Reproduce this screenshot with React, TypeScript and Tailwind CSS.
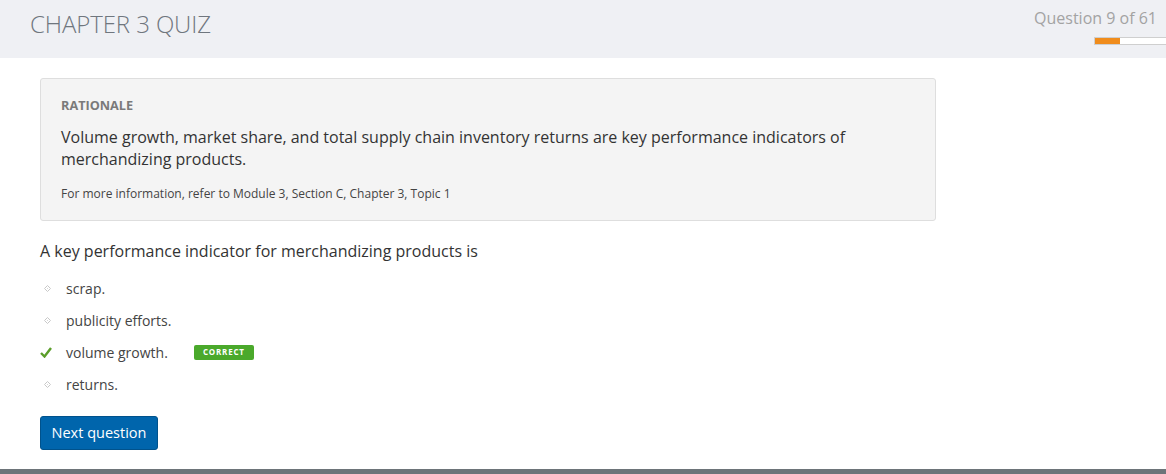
import React from "react";

const font = { fontFamily: '"Open Sans", "Noto Sans", Arial, sans-serif' };

function Bullet() {
  return (
    <svg width="7" height="7" viewBox="0 0 7 7" className="block">
      <path d="M3.5 0.5 L6.5 3.5 L3.5 6.5 L0.5 3.5 Z" fill="none" stroke="#c8c8c8" strokeWidth="1" />
      <rect x="3" y="3" width="1" height="1" fill="#d8d8d8" />
    </svg>
  );
}

function Check() {
  return (
    <svg width="12" height="11" viewBox="0 0 12 11" className="block">
      <path d="M1 6 L4.5 9.5 L11 1" fill="none" stroke="#5b9e2a" strokeWidth="2.4" />
    </svg>
  );
}

export default function App() {
  const options = [
    { text: "scrap.", correct: false },
    { text: "publicity efforts.", correct: false },
    { text: "volume growth.", correct: true },
    { text: "returns.", correct: false },
  ];
  return (
    <div className="w-[1166px] h-[474px] bg-white flex flex-col overflow-hidden" style={font}>
      <header className="h-[58px] bg-[#eff0f4] flex justify-between shrink-0">
        <h1 className="pl-[30px] pt-[8px] text-[24px] font-light text-[#6f767e] leading-[32px] tracking-[-0.1px]">
          CHAPTER 3 QUIZ
        </h1>
        <div className="flex flex-col items-end pt-[7px]">
          <div className="pr-[9px] text-[16px] text-[#a3a3a3] leading-[22px]">Question 9 of 61</div>
          <div className="mt-[8px] w-[72px] h-[8px] border border-[#cfcfcf] border-r-0 bg-white flex">
            <div className="w-[25px] h-full bg-[#f08c1c]" />
          </div>
        </div>
      </header>
      <main className="flex-1 pl-[40px] pt-[20px]">
        <section className="w-[896px] h-[143px] bg-[#f4f4f4] border border-[#dedede] rounded-[3px] px-[20px] pt-[17px]">
          <div className="text-[12.7px] font-bold text-[#7a7a7a] leading-[18px]">RATIONALE</div>
          <p className="mt-[12px] text-[16px] text-[#333] leading-[22px] pr-[60px]">
            Volume growth, market share, and total supply chain inventory returns are key performance indicators of merchandizing products.
          </p>
          <p className="mt-[15px] text-[12px] text-[#444] leading-[18px]">
            For more information, refer to Module 3, Section C, Chapter 3, Topic 1
          </p>
        </section>
        <p className="mt-[19px] text-[16px] text-[#333] leading-[22px]">
          A key performance indicator for merchandizing products is
        </p>
        <ul className="mt-[10px] flex flex-col">
          {options.map((o) => (
            <li key={o.text} className="h-[32px] flex items-center text-[14px] text-[#444]">
              <span className="w-[26px] flex justify-start">
                {o.correct ? (
                  <span className="pl-[0px]"><Check /></span>
                ) : (
                  <span className="pl-[4px]"><Bullet /></span>
                )}
              </span>
              <span>{o.text}</span>
              {o.correct && (
                <span className="ml-[26px] h-[15px] w-[60px] rounded-[2px] bg-[#4aa92b] text-white text-[8px] font-bold tracking-[0.8px] flex items-center justify-center">
                  CORRECT
                </span>
              )}
            </li>
          ))}
        </ul>
        <button className="mt-[16px] h-[34px] w-[118px] rounded-[3px] bg-[#0065ac] border border-[#00528c] text-white text-[14.5px] leading-[20px]">
          Next question
        </button>
      </main>
      <div className="h-[5px] bg-[#6d7479] shrink-0" />
    </div>
  );
}
